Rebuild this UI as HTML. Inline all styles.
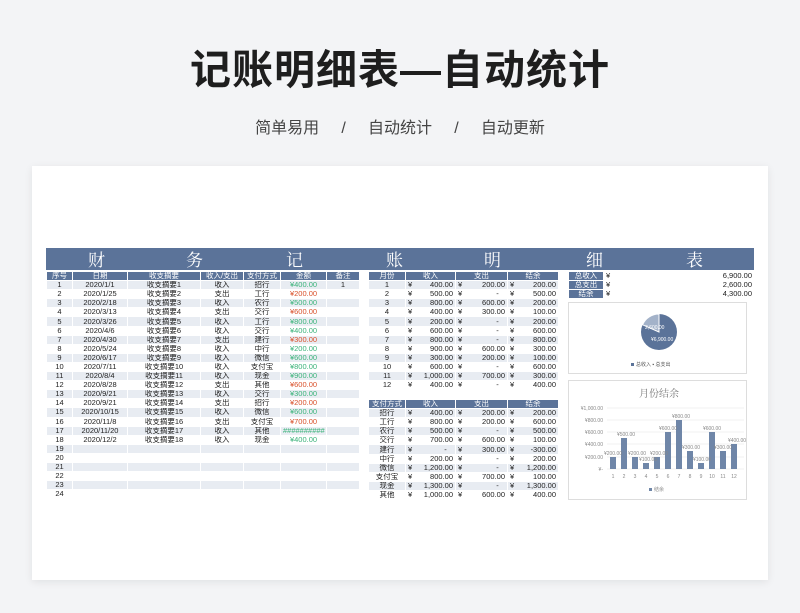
<!DOCTYPE html>
<html><head><meta charset="utf-8"><style>
*{margin:0;padding:0;box-sizing:border-box}
body{width:800px;height:613px;background:#f3f4f6;font-family:"Liberation Sans","Noto Sans CJK SC",sans-serif;position:relative;overflow:hidden}
.t1{position:absolute;top:36px;left:0;width:800px;text-align:center;font-size:41px;font-weight:bold;color:#1e1e1e;letter-spacing:1px}
.t2{position:absolute;top:114px;left:0;width:800px;text-align:center;font-size:16px;color:#444;word-spacing:0}
.card{position:absolute;left:32px;top:166px;width:736px;height:414px;background:#fff;box-shadow:0 2px 8px rgba(0,0,0,.08)}
.ban{position:absolute;left:46px;top:248px;width:708px;height:22px;background:#5b7399;color:#fff;font-family:"Noto Serif CJK SC",serif;font-size:17px;line-height:22px}
.ban span{position:absolute;top:0}
table{position:absolute;border-collapse:collapse;table-layout:fixed;font-size:7.5px;color:#222}
td,th{height:9.1px;line-height:8px;padding:0 2px;white-space:nowrap;overflow:hidden;text-align:center;border:1px solid #fff}
th{background:#5b7399;color:#fff;font-weight:normal}
tr:nth-child(even) td{background:#e8ecf2}
.g{color:#3bb37a}.r{color:#d9502a}
.m td{text-align:right}.m td:first-child{text-align:center}
.y{float:left}
.box{position:absolute;border:1px solid #ddd;background:#fff}
</style></head><body>
<div class="t1">记账明细表—自动统计</div>
<div class="t2">简单易用&nbsp;&nbsp;&nbsp;&nbsp;&nbsp;/&nbsp;&nbsp;&nbsp;&nbsp;&nbsp;自动统计&nbsp;&nbsp;&nbsp;&nbsp;&nbsp;/&nbsp;&nbsp;&nbsp;&nbsp;&nbsp;自动更新</div>
<div class="card"></div>
<div class="ban"><span style="left:42px">财</span><span style="left:140px">务</span><span style="left:240px">记</span><span style="left:340px">账</span><span style="left:438px">明</span><span style="left:540px">细</span><span style="left:640px">表</span></div>

<table style="left:46px;top:271px;width:313px">
<colgroup><col style="width:26px"><col style="width:55px"><col style="width:73px"><col style="width:43px"><col style="width:37px"><col style="width:46px"><col style="width:33px"></colgroup>
<tr><th>序号</th><th>日期</th><th>收支摘要</th><th>收入/支出</th><th>支付方式</th><th>金额</th><th>备注</th></tr>
<tr><td>1</td><td>2020/1/1</td><td>收支摘要1</td><td>收入</td><td>招行</td><td class="g">¥400.00</td><td>1</td></tr>
<tr><td>2</td><td>2020/1/25</td><td>收支摘要2</td><td>支出</td><td>工行</td><td class="r">¥200.00</td><td></td></tr>
<tr><td>3</td><td>2020/2/18</td><td>收支摘要3</td><td>收入</td><td>农行</td><td class="g">¥500.00</td><td></td></tr>
<tr><td>4</td><td>2020/3/13</td><td>收支摘要4</td><td>支出</td><td>交行</td><td class="r">¥600.00</td><td></td></tr>
<tr><td>5</td><td>2020/3/26</td><td>收支摘要5</td><td>收入</td><td>工行</td><td class="g">¥800.00</td><td></td></tr>
<tr><td>6</td><td>2020/4/6</td><td>收支摘要6</td><td>收入</td><td>交行</td><td class="g">¥400.00</td><td></td></tr>
<tr><td>7</td><td>2020/4/30</td><td>收支摘要7</td><td>支出</td><td>建行</td><td class="r">¥300.00</td><td></td></tr>
<tr><td>8</td><td>2020/5/24</td><td>收支摘要8</td><td>收入</td><td>中行</td><td class="g">¥200.00</td><td></td></tr>
<tr><td>9</td><td>2020/6/17</td><td>收支摘要9</td><td>收入</td><td>微信</td><td class="g">¥600.00</td><td></td></tr>
<tr><td>10</td><td>2020/7/11</td><td>收支摘要10</td><td>收入</td><td>支付宝</td><td class="g">¥800.00</td><td></td></tr>
<tr><td>11</td><td>2020/8/4</td><td>收支摘要11</td><td>收入</td><td>现金</td><td class="g">¥900.00</td><td></td></tr>
<tr><td>12</td><td>2020/8/28</td><td>收支摘要12</td><td>支出</td><td>其他</td><td class="r">¥600.00</td><td></td></tr>
<tr><td>13</td><td>2020/9/21</td><td>收支摘要13</td><td>收入</td><td>交行</td><td class="g">¥300.00</td><td></td></tr>
<tr><td>14</td><td>2020/9/21</td><td>收支摘要14</td><td>支出</td><td>招行</td><td class="r">¥200.00</td><td></td></tr>
<tr><td>15</td><td>2020/10/15</td><td>收支摘要15</td><td>收入</td><td>微信</td><td class="g">¥600.00</td><td></td></tr>
<tr><td>16</td><td>2020/11/8</td><td>收支摘要16</td><td>支出</td><td>支付宝</td><td class="r">¥700.00</td><td></td></tr>
<tr><td>17</td><td>2020/11/20</td><td>收支摘要17</td><td>收入</td><td>其他</td><td class="g">##########</td><td></td></tr>
<tr><td>18</td><td>2020/12/2</td><td>收支摘要18</td><td>收入</td><td>现金</td><td class="g">¥400.00</td><td></td></tr>
<tr><td>19</td><td></td><td></td><td></td><td></td><td></td><td></td></tr>
<tr><td>20</td><td></td><td></td><td></td><td></td><td></td><td></td></tr>
<tr><td>21</td><td></td><td></td><td></td><td></td><td></td><td></td></tr>
<tr><td>22</td><td></td><td></td><td></td><td></td><td></td><td></td></tr>
<tr><td>23</td><td></td><td></td><td></td><td></td><td></td><td></td></tr>
<tr><td>24</td><td></td><td></td><td></td><td></td><td></td><td></td></tr>
</table>

<table class="m" style="left:368px;top:271px;width:190px">
<colgroup><col style="width:37px"><col style="width:50px"><col style="width:52px"><col style="width:51px"></colgroup>
<tr><th>月份</th><th>收入</th><th>支出</th><th>结余</th></tr>
<tr><td>1</td><td><span class="y">¥</span>400.00</td><td><span class="y">¥</span>200.00</td><td><span class="y">¥</span>200.00</td></tr>
<tr><td>2</td><td><span class="y">¥</span>500.00</td><td><span class="y">¥</span>-&nbsp;&nbsp;&nbsp;</td><td><span class="y">¥</span>500.00</td></tr>
<tr><td>3</td><td><span class="y">¥</span>800.00</td><td><span class="y">¥</span>600.00</td><td><span class="y">¥</span>200.00</td></tr>
<tr><td>4</td><td><span class="y">¥</span>400.00</td><td><span class="y">¥</span>300.00</td><td><span class="y">¥</span>100.00</td></tr>
<tr><td>5</td><td><span class="y">¥</span>200.00</td><td><span class="y">¥</span>-&nbsp;&nbsp;&nbsp;</td><td><span class="y">¥</span>200.00</td></tr>
<tr><td>6</td><td><span class="y">¥</span>600.00</td><td><span class="y">¥</span>-&nbsp;&nbsp;&nbsp;</td><td><span class="y">¥</span>600.00</td></tr>
<tr><td>7</td><td><span class="y">¥</span>800.00</td><td><span class="y">¥</span>-&nbsp;&nbsp;&nbsp;</td><td><span class="y">¥</span>800.00</td></tr>
<tr><td>8</td><td><span class="y">¥</span>900.00</td><td><span class="y">¥</span>600.00</td><td><span class="y">¥</span>300.00</td></tr>
<tr><td>9</td><td><span class="y">¥</span>300.00</td><td><span class="y">¥</span>200.00</td><td><span class="y">¥</span>100.00</td></tr>
<tr><td>10</td><td><span class="y">¥</span>600.00</td><td><span class="y">¥</span>-&nbsp;&nbsp;&nbsp;</td><td><span class="y">¥</span>600.00</td></tr>
<tr><td>11</td><td><span class="y">¥</span>1,000.00</td><td><span class="y">¥</span>700.00</td><td><span class="y">¥</span>300.00</td></tr>
<tr><td>12</td><td><span class="y">¥</span>400.00</td><td><span class="y">¥</span>-&nbsp;&nbsp;&nbsp;</td><td><span class="y">¥</span>400.00</td></tr>
</table>

<table class="m" style="left:368px;top:399px;width:190px">
<colgroup><col style="width:37px"><col style="width:50px"><col style="width:52px"><col style="width:51px"></colgroup>
<tr><th>支付方式</th><th>收入</th><th>支出</th><th>结余</th></tr>
<tr><td>招行</td><td><span class="y">¥</span>400.00</td><td><span class="y">¥</span>200.00</td><td><span class="y">¥</span>200.00</td></tr>
<tr><td>工行</td><td><span class="y">¥</span>800.00</td><td><span class="y">¥</span>200.00</td><td><span class="y">¥</span>600.00</td></tr>
<tr><td>农行</td><td><span class="y">¥</span>500.00</td><td><span class="y">¥</span>-&nbsp;&nbsp;&nbsp;</td><td><span class="y">¥</span>500.00</td></tr>
<tr><td>交行</td><td><span class="y">¥</span>700.00</td><td><span class="y">¥</span>600.00</td><td><span class="y">¥</span>100.00</td></tr>
<tr><td>建行</td><td><span class="y">¥</span>-&nbsp;&nbsp;&nbsp;</td><td><span class="y">¥</span>300.00</td><td><span class="y">¥</span>-300.00</td></tr>
<tr><td>中行</td><td><span class="y">¥</span>200.00</td><td><span class="y">¥</span>-&nbsp;&nbsp;&nbsp;</td><td><span class="y">¥</span>200.00</td></tr>
<tr><td>微信</td><td><span class="y">¥</span>1,200.00</td><td><span class="y">¥</span>-&nbsp;&nbsp;&nbsp;</td><td><span class="y">¥</span>1,200.00</td></tr>
<tr><td>支付宝</td><td><span class="y">¥</span>800.00</td><td><span class="y">¥</span>700.00</td><td><span class="y">¥</span>100.00</td></tr>
<tr><td>现金</td><td><span class="y">¥</span>1,300.00</td><td><span class="y">¥</span>-&nbsp;&nbsp;&nbsp;</td><td><span class="y">¥</span>1,300.00</td></tr>
<tr><td>其他</td><td><span class="y">¥</span>1,000.00</td><td><span class="y">¥</span>600.00</td><td><span class="y">¥</span>400.00</td></tr>
</table>

<table class="m" style="left:568px;top:271px;width:186px">
<colgroup><col style="width:35px"><col style="width:151px"></colgroup>
<tr><th>总收入</th><td style="background:#fff"><span class="y">¥</span>6,900.00</td></tr>
<tr><th>总支出</th><td style="background:#fff"><span class="y">¥</span>2,600.00</td></tr>
<tr><th>结余</th><td style="background:#fff"><span class="y">¥</span>4,300.00</td></tr>
</table>

<div class="box" style="left:568px;top:302px;width:179px;height:72px">
<svg width="179" height="72" style="position:absolute;left:0;top:0">
<circle cx="90" cy="29" r="18" fill="#5b7399"/>
<path d="M90 29 L73.5 21.8 A18 18 0 0 1 90 11 Z" fill="#a3b2c9" stroke="#fff" stroke-width="1"/>
<text x="76" y="26" font-size="5" fill="#fff" font-family="Liberation Sans">2,600.00</text>
<text x="82" y="38" font-size="5" fill="#fff" font-family="Liberation Sans">¥6,900.00</text>
<rect x="62" y="60" width="3" height="3" fill="#5b7399"/><text x="67" y="63" font-size="5" fill="#555" font-family="Liberation Sans,Noto Sans CJK SC">总收入 ▪ 总支出</text>
</svg></div>

<div class="box" style="left:568px;top:380px;width:179px;height:120px">
<svg width="179" height="120" style="position:absolute;left:0;top:0" font-family="Liberation Sans,Noto Sans CJK SC">
<text x="90" y="16" font-size="10" fill="#777" text-anchor="middle" font-family="Noto Serif CJK SC,serif">月份结余</text>
<g stroke="#e4e4e4" stroke-width="0.6">
<line x1="38" y1="27" x2="175" y2="27"/><line x1="38" y1="39" x2="175" y2="39"/><line x1="38" y1="51" x2="175" y2="51"/><line x1="38" y1="63" x2="175" y2="63"/><line x1="38" y1="76" x2="175" y2="76"/><line x1="38" y1="88" x2="175" y2="88"/></g>
<g font-size="5" fill="#888" text-anchor="end"><text x="34" y="29">¥1,000.00</text><text x="34" y="41">¥800.00</text><text x="34" y="53">¥600.00</text><text x="34" y="65">¥400.00</text><text x="34" y="78">¥200.00</text><text x="34" y="90">¥-</text></g>
<g fill="#6f86a8">
<rect x="41" y="76" width="6" height="12"/><rect x="52" y="57" width="6" height="31"/><rect x="63" y="76" width="6" height="12"/><rect x="74" y="82" width="6" height="6"/><rect x="85" y="76" width="6" height="12"/><rect x="96" y="51" width="6" height="37"/><rect x="107" y="39" width="6" height="49"/><rect x="118" y="70" width="6" height="18"/><rect x="129" y="82" width="6" height="6"/><rect x="140" y="51" width="6" height="37"/><rect x="151" y="70" width="6" height="18"/><rect x="162" y="63" width="6" height="25"/></g>
<g font-size="5" fill="#888" text-anchor="middle"><text x="44" y="97">1</text><text x="55" y="97">2</text><text x="66" y="97">3</text><text x="77" y="97">4</text><text x="88" y="97">5</text><text x="99" y="97">6</text><text x="110" y="97">7</text><text x="121" y="97">8</text><text x="132" y="97">9</text><text x="143" y="97">10</text><text x="154" y="97">11</text><text x="165" y="97">12</text>
<text x="44" y="74">¥200.00</text><text x="57" y="55">¥500.00</text><text x="68" y="74">¥200.00</text><text x="79" y="80">¥100.00</text><text x="90" y="74">¥200.00</text><text x="99" y="49">¥600.00</text><text x="112" y="37">¥800.00</text><text x="122" y="68">¥300.00</text><text x="133" y="80">¥100.00</text><text x="143" y="49">¥600.00</text><text x="154" y="68">¥300.00</text><text x="168" y="61">¥400.00</text>
</g>
<rect x="80" y="107" width="3" height="3" fill="#6f86a8"/><text x="85" y="110" font-size="5" fill="#888">结余</text>
</svg></div>
</body></html>
